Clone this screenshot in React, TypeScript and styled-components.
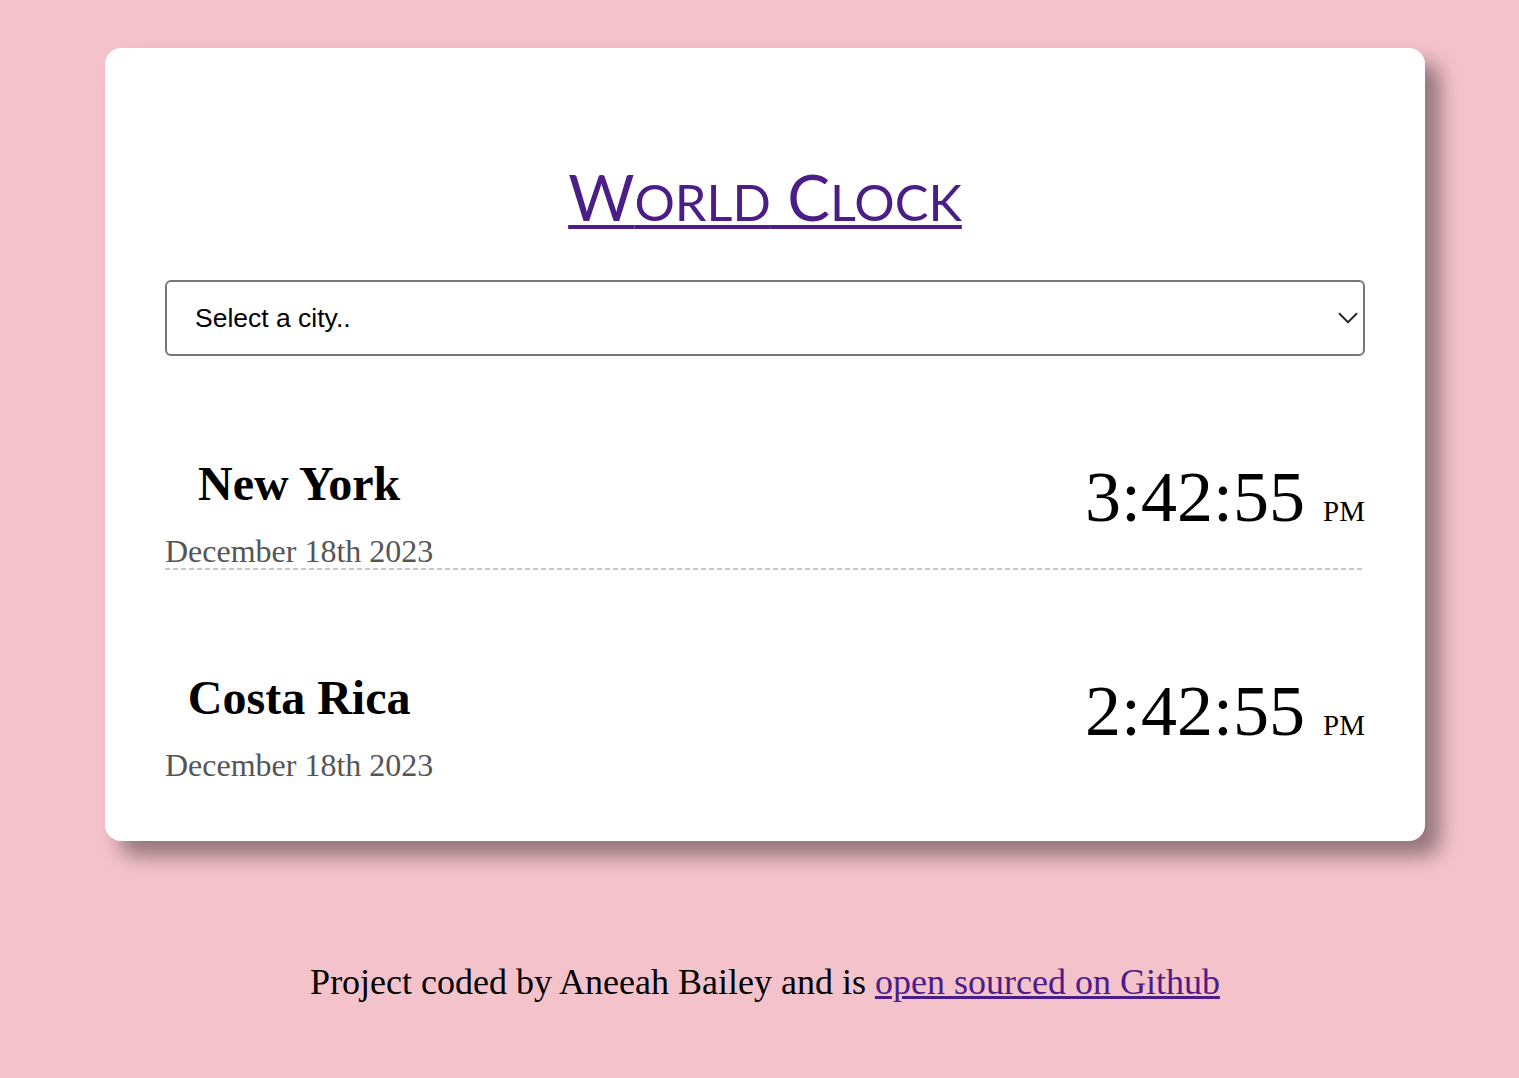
import React from "react";
import styled, { createGlobalStyle } from "styled-components";
import { ChevronDown } from "lucide-react";

const Global = createGlobalStyle`
  html, body { margin: 0; padding: 0; }
  body {
    background: #f4c2cb;
    font-family: "Liberation Serif", "Times New Roman", serif;
    color: #000;
  }
  * { box-sizing: border-box; }
`;

const Page = styled.div`
  padding: 48px 0 60px 11px;
  min-height: 1078px;
`;

const Card = styled.main`
  width: 1320px;
  margin: 0 auto;
  background: #fff;
  border-radius: 16px;
  padding: 109px 60px 57px;
  box-shadow: 15px 15px 20px rgba(0, 0, 0, 0.4);
`;

const Title = styled.h1`
  margin: 0 0 43px;
  height: 80px;
  text-align: center;
  font-family: "Lato", "Open Sans", sans-serif;
  font-weight: 400;
  font-size: 64px;
  line-height: 80px;
  a {
    color: #4b1d86;
    text-decoration: underline;
    text-decoration-thickness: 4px;
    text-underline-offset: 4px;
  }
`;

const SmallCaps = styled.span`
  font-size: 50.5px;
  line-height: 1;
  text-transform: uppercase;
`;

const SelectWrap = styled.div`
  position: relative;
`;

const Select = styled.select`
  width: 100%;
  height: 76px;
  appearance: none;
  background: #fff;
  border: 2px solid #777;
  border-radius: 6px;
  padding: 0 28px;
  font-family: "Liberation Sans", Arial, sans-serif;
  font-size: 26.5px;
  color: #000;
  outline: none;
`;

const Chevron = styled.span`
  position: absolute;
  right: 0;
  top: 50%;
  transform: translateY(-50%);
  display: flex;
  pointer-events: none;
  color: #222;
`;

const Row = styled.section<{ $last?: boolean }>`
  display: flex;
  justify-content: space-between;
  align-items: flex-start;
  padding-top: 100px;
  min-height: 214px;
  background: ${(p) =>
    p.$last
      ? "none"
      : "repeating-linear-gradient(to right, #c9c9c9 0 5px, transparent 5px 8px) left bottom / 100% 2px no-repeat"};
`;

const CityCol = styled.div`
  display: flex;
  flex-direction: column;
  align-items: center;
`;

const CityName = styled.h2`
  margin: 0 0 22px;
  font-size: 48px;
  font-weight: 700;
  line-height: normal;
`;

const DateText = styled.div`
  font-size: 32px;
  color: #555;
  line-height: normal;
`;

const Time = styled.div`
  font-size: 72px;
  line-height: normal;
  small {
    font-size: 29px;
  }
`;

const Footer = styled.footer`
  margin-top: 120px;
  text-align: center;
  font-size: 36px;
  a {
    color: #4b1d86;
  }
`;

const cities = [
  { name: "New York", date: "December 18th 2023", time: "3:42:55" },
  { name: "Costa Rica", date: "December 18th 2023", time: "2:42:55" },
];

export default function App() {
  return (
    <>
      <Global />
      <Page>
        <Card>
          <Title>
            <a href="#">
              W<SmallCaps>orld</SmallCaps> C<SmallCaps>lock</SmallCaps>
            </a>
          </Title>
          <SelectWrap>
            <Select defaultValue="">
              <option value="">Select a city..</option>
              <option value="tokyo">Tokyo</option>
              <option value="paris">Paris</option>
            </Select>
            <Chevron>
              <ChevronDown size={34} strokeWidth={1.3} />
            </Chevron>
          </SelectWrap>
          {cities.map((c, i) => (
            <Row key={c.name} $last={i === cities.length - 1}>
              <CityCol>
                <CityName>{c.name}</CityName>
                <DateText>{c.date}</DateText>
              </CityCol>
              <Time>
                {c.time} <small>PM</small>
              </Time>
            </Row>
          ))}
        </Card>
        <Footer>
          Project coded by Aneeah Bailey and is{" "}
          <a href="#">open sourced on Github</a>
        </Footer>
      </Page>
    </>
  );
}
